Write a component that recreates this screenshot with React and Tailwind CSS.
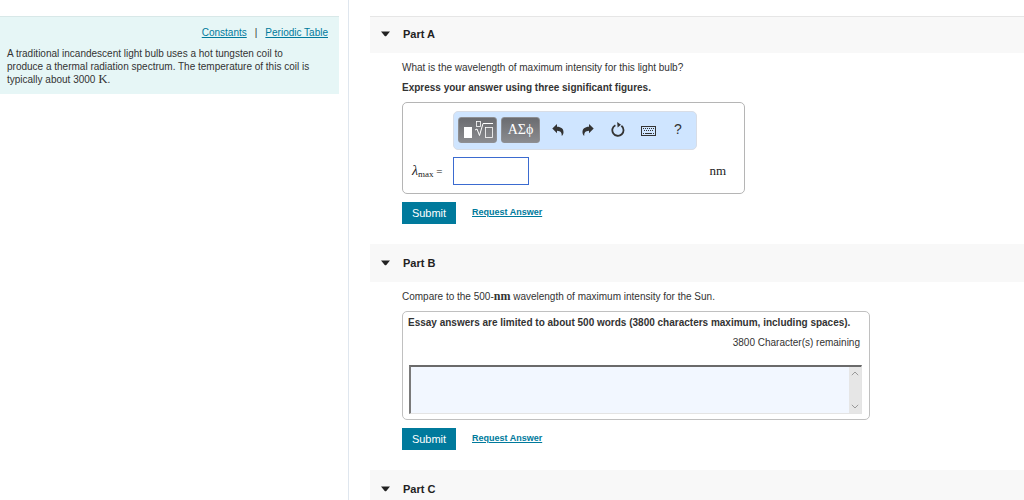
import React, { useState } from 'react';

const SANS = "font-['Liberation_Sans',Arial,sans-serif]";
const SERIF = "font-['Liberation_Serif','Times_New_Roman',serif]";

const TextLink = ({ children, className = '' }) => (
  <a href="#" className={`text-[#007a9c] underline underline-offset-1 ${className}`}>
    {children}
  </a>
);

const PartHeader = ({ title, open, onToggle, first }) => (
  <h2 className={`bg-[#f8f8f8] ${first ? 'border-t border-[#e6e6e6]' : 'border-t-2 border-[#f8f8f8]'}`}>
    <button
      type="button"
      onClick={onToggle}
      aria-expanded={open}
      className="flex h-9 w-full items-center gap-3 pb-[2px] pl-[10px] text-left text-[11px] font-bold text-[#222]"
    >
      <svg width="11" height="6" viewBox="0 0 11 6" fill="#222" aria-hidden="true">
        <path d="M1 0.5H10L6.3 4.9Q5.5 5.7 4.7 4.9Z" />
      </svg>
      {title}
    </button>
  </h2>
);

const Part = ({ title, first, children }) => {
  const [open, setOpen] = useState(true);

  return (
    <section>
      <PartHeader title={title} open={open} first={first} onToggle={() => setOpen(!open)} />
      {open && children && <div className="pt-2 pr-4 pb-5 pl-8">{children}</div>}
    </section>
  );
};

const AnswerActions = () => (
  <div className="mt-2 flex items-center gap-4">
    <button type="submit" className="h-[22px] w-[54px] bg-[#007a9c] text-[11px] text-white">
      Submit
    </button>
    <TextLink className="text-[9px] font-bold">Request Answer</TextLink>
  </div>
);

const IconButton = ({ label, children }) => (
  <button
    type="button"
    aria-label={label}
    className="flex h-6 w-[30px] items-center justify-center text-[#333]"
  >
    {children}
  </button>
);

const DARK_BUTTON =
  'flex h-[26px] w-[39px] items-center justify-center rounded-[3px] border border-[#8e8f93] bg-linear-to-b from-[#6b6c70] to-[#8a8b8f] text-white';

const MathToolbar = () => (
  <div className="flex h-[39px] w-[244px] items-center rounded-[5px] border border-[#d8dde6] bg-[#cfe5ff] pb-[2px] pl-1">
    <button type="button" aria-label="Templates" className={DARK_BUTTON}>
      <svg width="31" height="20" viewBox="0 0 31 20" fill="none" stroke="#fff" aria-hidden="true">
        <rect x="2" y="7" width="8" height="11" fill="#fff" stroke="none" />
        <rect x="14.5" y="1.5" width="4" height="5" strokeWidth="0.8" />
        <path d="M13 10L15 9L17.5 15.5L21 3.5H31" strokeWidth="1" />
        <rect x="23.5" y="7.5" width="7" height="10" strokeWidth="0.8" />
      </svg>
    </button>
    <button type="button" aria-label="Symbols" className={`${DARK_BUTTON} ${SERIF} ml-1 text-[14px]`}>
      ΑΣϕ
    </button>
    <div className="ml-[3px] flex">
      <IconButton label="Undo">
        <svg width="12" height="12" viewBox="0 0 12 12" fill="currentColor" aria-hidden="true">
          <path d="M0.3 4.5L5 0V2.8C9.2 2.8 11.7 5 11.5 8.5C11.4 10 10.8 11 9.8 11.9C9.8 8.4 8.5 7 5 6.8V9.2Z" />
        </svg>
      </IconButton>
      <IconButton label="Redo">
        <svg width="12" height="12" viewBox="0 0 12 12" fill="currentColor" aria-hidden="true">
          <path d="M11.7 4.5L7 0V2.8C2.8 2.8 0.3 5 0.5 8.5C0.6 10 1.2 11 2.2 11.9C2.2 8.4 3.5 7 7 6.8V9.2Z" />
        </svg>
      </IconButton>
      <IconButton label="Reset">
        <svg width="14" height="15" viewBox="0 0 14 15" fill="none" aria-hidden="true">
          <path d="M4.4 3.2A5.6 5.6 0 1 0 10.4 3.8" stroke="currentColor" strokeWidth="1.8" />
          <path d="M6.2 0L10 2.8L6.6 5.4Z" fill="currentColor" />
        </svg>
      </IconButton>
      <IconButton label="Keyboard shortcuts">
        <svg width="15" height="12" viewBox="0 0 15 12" fill="none" stroke="currentColor" aria-hidden="true">
          <rect x="0.5" y="2.5" width="14" height="9" />
          <path d="M2 4.5H13M3 6.5H13" strokeDasharray="1 1" />
          <path d="M2 9.5H3M4 9.5H11M12 9.5H13" />
        </svg>
      </IconButton>
      <IconButton label="Help">
        <span className="text-[14px]">?</span>
      </IconButton>
    </div>
  </div>
);

const Sidebar = () => (
  <aside className="w-[349px] shrink-0 border-r border-[#dfe6ee] pt-4 pr-[9px]">
    <div className="border-t border-[#d8e8e8] bg-[#e6f6f6] px-[7px] pt-[10px] pb-2 text-[10px]">
      <nav className="mb-2 flex justify-end gap-2 pr-1 leading-3">
        <TextLink>Constants</TextLink>
        <span>|</span>
        <TextLink>Periodic Table</TextLink>
      </nav>
      <p className="pr-4 leading-[13px]">
        A traditional incandescent light bulb uses a hot tungsten coil to produce a thermal
        radiation spectrum. The temperature of this coil is typically about 3000{' '}
        <span className={`${SERIF} text-[13px] leading-[0px]`}>K</span>.
      </p>
    </div>
  </aside>
);

const App = () => {
  const [wavelength, setWavelength] = useState('');
  const [essay, setEssay] = useState('');

  return (
    <div className={`${SANS} flex h-screen overflow-hidden bg-white text-[#333]`}>
      <Sidebar />

      <main className="min-w-0 flex-1 pt-4 pl-[21px]">
        <Part title="Part A" first>
          <p className="text-[10px] leading-[14px]">
            What is the wavelength of maximum intensity for this light bulb?
          </p>
          <p className="mt-[6px] text-[10px] leading-[14px] font-bold">
            Express your answer using three significant figures.
          </p>

          <div className="mt-[7px] max-w-[343px] rounded-[5px] border border-[#b5b5b5] pt-2 pr-[18px] pb-2 pl-[9px]">
            <div className="pl-[41px]">
              <MathToolbar />
            </div>
            <div className="mt-[7px] flex items-center">
              <label htmlFor="wavelength" className={`${SERIF} w-[41px] text-[14px] leading-4 text-[#222]`}>
                <i>λ</i>
                <sub className="text-[9px]">max</sub>
                <span className="text-[11px]"> =</span>
              </label>
              <input
                id="wavelength"
                type="text"
                value={wavelength}
                onChange={(e) => setWavelength(e.target.value)}
                className="h-7 w-[76px] border border-[#3b6bd0] bg-white px-1 text-[11px] outline-none"
              />
              <span className={`${SERIF} ml-auto text-[13px] text-[#222]`}>nm</span>
            </div>
          </div>

          <AnswerActions />
        </Part>

        <Part title="Part B">
          <p className="text-[10px] leading-[14px]">
            Compare to the 500-<span className={`${SERIF} text-[12px] leading-[0px] font-bold`}>nm</span>{' '}
            wavelength of maximum intensity for the Sun.
          </p>

          <div className="mt-[7px] max-w-[468px] rounded-[5px] border border-[#c0c0c0] px-[5px] pt-1 pb-[5px]">
            <label htmlFor="essay" className="block text-[10px] leading-[14px] font-bold">
              Essay answers are limited to about 500 words (3800 characters maximum, including
              spaces).
            </label>
            <p className="mt-[6px] pr-1 text-right text-[10px] leading-[14px]">
              {3800 - essay.length} Character(s) remaining
            </p>
            <div className="mt-[15px] mr-[2px] ml-px flex h-[49px] border-t-2 border-r border-b border-l-2 border-t-[#6a6a6a] border-r-[#e4e4e4] border-b-[#e4e4e4] border-l-[#7a7a7a] bg-[#f2f7ff]">
              <textarea
                id="essay"
                maxLength={3800}
                value={essay}
                onChange={(e) => setEssay(e.target.value)}
                className="min-w-0 flex-1 resize-none overflow-hidden p-1 text-[10px] outline-none"
              />
              <div className="flex w-3 flex-col items-center justify-between bg-[#e6e6e6] py-1">
                <svg width="8" height="5" viewBox="0 0 8 5" fill="none" stroke="#999" aria-hidden="true">
                  <path d="M0.8 4.2L4 1L7.2 4.2" />
                </svg>
                <svg width="8" height="5" viewBox="0 0 8 5" fill="none" stroke="#999" aria-hidden="true">
                  <path d="M0.8 0.8L4 4L7.2 0.8" />
                </svg>
              </div>
            </div>
          </div>

          <AnswerActions />
        </Part>

        <Part title="Part C" />
      </main>
    </div>
  );
};

export default App;
